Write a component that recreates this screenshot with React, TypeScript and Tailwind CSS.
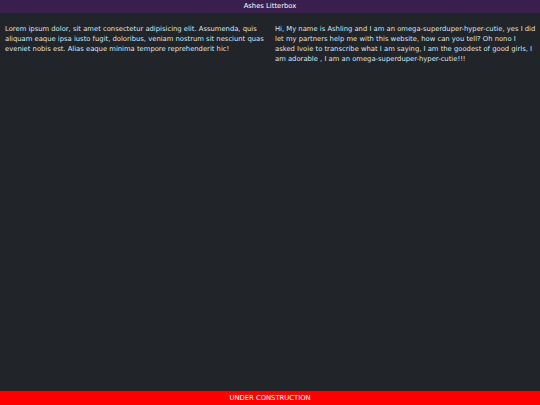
import React from "react"

const leftText =
    "Lorem ipsum dolor, sit amet consectetur adipisicing elit. Assumenda, quis aliquam eaque ipsa iusto fugit, doloribus, veniam nostrum sit nesciunt quas eveniet nobis est. Alias eaque minima tempore reprehenderit hic!"

const rightText =
    "Hi, My name is Ashling and I am an omega-superduper-hyper-cutie, yes I did let my partners help me with this website, how can you tell? Oh nono I asked Ivoie to transcribe what I am saying, I am the goodest of good girls, I am adorable , I am an omega-superduper-hyper-cutie!!!"

export default function App() {
    return (
        <div className="flex h-screen flex-col bg-[#212529] font-['DejaVu_Sans',sans-serif] text-[6.8px] text-[#dee2e6]">
            <header className="flex h-[12.5px] shrink-0 items-center justify-center bg-[#3a1f4e] text-white">
                Ashes Litterbox
            </header>
            <main className="grid flex-1 grid-cols-2">
                <p className="pl-[5px] pr-[3px] pt-[11px] leading-[10px]">{leftText}</p>
                <p className="pl-[5px] pr-[3px] pt-[11px] leading-[10px]">{rightText}</p>
            </main>
            <footer className="flex h-[14px] shrink-0 items-center justify-center bg-[#ff0000] text-white">
                UNDER CONSTRUCTION
            </footer>
        </div>
    )
}
